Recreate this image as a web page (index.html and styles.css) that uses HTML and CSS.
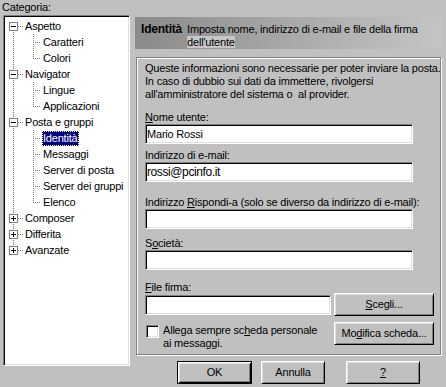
FILE: index.html
```html
<!DOCTYPE html>
<html lang="it">
<head>
<meta charset="UTF-8" />
<title>Preferenze - Identità</title>
<link rel="stylesheet" href="styles.css">
</head>
<body>
<div class="dialog">
    <div class="categories">
        <div class="caption">Categoria:</div>
        <div class="tree">
            <ul class="tree-root">
                <li>
                    <div class="row"><svg class="toggle" width="9" height="9" viewBox="0 0 9 9"><rect x="0.5" y="0.5" width="8" height="8" fill="#fff" stroke="#808080"/><path d="M2 4.5h5" stroke="#000"/></svg><span class="dash"></span><span class="node">Aspetto</span></div>
                    <ul class="tree-sub">
                        <li class="row"><span class="dash"></span><span class="node">Caratteri</span></li>
                        <li class="row"><span class="dash"></span><span class="node">Colori</span></li>
                    </ul>
                </li>
                <li>
                    <div class="row"><svg class="toggle" width="9" height="9" viewBox="0 0 9 9"><rect x="0.5" y="0.5" width="8" height="8" fill="#fff" stroke="#808080"/><path d="M2 4.5h5" stroke="#000"/></svg><span class="dash"></span><span class="node">Navigator</span></div>
                    <ul class="tree-sub">
                        <li class="row"><span class="dash"></span><span class="node">Lingue</span></li>
                        <li class="row"><span class="dash"></span><span class="node">Applicazioni</span></li>
                    </ul>
                </li>
                <li>
                    <div class="row"><svg class="toggle" width="9" height="9" viewBox="0 0 9 9"><rect x="0.5" y="0.5" width="8" height="8" fill="#fff" stroke="#808080"/><path d="M2 4.5h5" stroke="#000"/></svg><span class="dash"></span><span class="node">Posta e gruppi</span></div>
                    <ul class="tree-sub">
                        <li class="row"><span class="dash"></span><span class="node selected">Identità</span></li>
                        <li class="row"><span class="dash"></span><span class="node">Messaggi</span></li>
                        <li class="row"><span class="dash"></span><span class="node">Server di posta</span></li>
                        <li class="row"><span class="dash"></span><span class="node">Server dei gruppi</span></li>
                        <li class="row"><span class="dash"></span><span class="node">Elenco</span></li>
                    </ul>
                </li>
                <li>
                    <div class="row"><svg class="toggle" width="9" height="9" viewBox="0 0 9 9"><rect x="0.5" y="0.5" width="8" height="8" fill="#fff" stroke="#808080"/><path d="M2 4.5h5M4.5 2v5" stroke="#000"/></svg><span class="dash"></span><span class="node">Composer</span></div>
                </li>
                <li>
                    <div class="row"><svg class="toggle" width="9" height="9" viewBox="0 0 9 9"><rect x="0.5" y="0.5" width="8" height="8" fill="#fff" stroke="#808080"/><path d="M2 4.5h5M4.5 2v5" stroke="#000"/></svg><span class="dash"></span><span class="node">Differita</span></div>
                </li>
                <li>
                    <div class="row"><svg class="toggle" width="9" height="9" viewBox="0 0 9 9"><rect x="0.5" y="0.5" width="8" height="8" fill="#fff" stroke="#808080"/><path d="M2 4.5h5M4.5 2v5" stroke="#000"/></svg><span class="dash"></span><span class="node">Avanzate</span></div>
                </li>
            </ul>
        </div>
    </div>

    <div class="panel">
        <div class="banner">
            <span class="banner-title">Identità</span>
            <span class="banner-text">Imposta nome, indirizzo di e-mail e file della firma <span class="hl">dell'utente</span></span>
        </div>

        <div class="group">
            <p class="intro">Queste informazioni sono necessarie per poter inviare la posta.<br>In caso di dubbio sui dati da immettere, rivolgersi<br>all'amministratore del sistema o&nbsp; al provider.</p>

            <div class="field f-name">
                <label><u>N</u>ome utente:</label>
                <input class="text" type="text" value="Mario Rossi">
            </div>
            <div class="field f-mail">
                <label>Indirizzo di e-mail:</label>
                <input class="text mail" type="text" value="rossi@pcinfo.it">
            </div>
            <div class="field f-reply">
                <label>Indirizzo <u>R</u>ispondi-a (solo se diverso da indirizzo di e-mail):</label>
                <input class="text" type="text">
            </div>
            <div class="field f-org">
                <label>S<u>o</u>cietà:</label>
                <input class="text" type="text">
            </div>
            <div class="field f-sig">
                <label><u>F</u>ile firma:</label>
                <div class="sig-row">
                    <input class="text short" type="text">
                    <button class="btn"><u>S</u>cegli...</button>
                </div>
            </div>
            <div class="card-row">
                <div class="check-wrap">
                    <input class="check" type="checkbox">
                    <span class="check-label">Allega sempre sc<u>h</u>eda personale<br>ai messaggi.</span>
                </div>
                <button class="btn">Mo<u>d</u>ifica scheda...</button>
            </div>
        </div>

        <div class="actions">
            <button class="btn default ok">OK</button>
            <button class="btn cancel">Annulla</button>
            <button class="btn help"><u>?</u></button>
        </div>
    </div>
</div>
</body>
</html>
```

FILE: styles.css
```css
* {
    margin: 0;
    padding: 0;
    box-sizing: border-box;
}
body {
    width: 446px;
    height: 387px;
    overflow: hidden;
    background: #c0c0c0;
    color: #000;
    font-family: "Liberation Sans", Arial, sans-serif;
    font-size: 11px;
    letter-spacing: -0.2px;
    line-height: 13px;
}
u { text-decoration: underline; text-underline-offset: 1px; }

.dialog {
    display: flex;
    gap: 5px;
    padding: 1px 0 0 3px;
}

/* left: category tree */
.categories {
    width: 127px;
}
.caption {
    height: 14px;
    margin-left: -1px;
}
.tree {
    height: 351px;
    background: #fff;
    border: 1px solid;
    border-color: #808080 #fff #fff #808080;
    box-shadow: inset 1px 1px #000, inset -1px -1px #dfdfdf;
    padding: 1px;
}
.tree ul { list-style: none; }
.tree-root {
    padding: 1px 0 0 4px;
    background: repeating-linear-gradient(to bottom, #808080 0 1px, transparent 1px 2px) no-repeat;
    background-size: 1px calc(100% - 16px);
    background-position: 8px 9px;
}
.tree-sub {
    margin-left: -4px;
    background: repeating-linear-gradient(to bottom, #808080 0 1px, transparent 1px 2px) no-repeat;
    background-size: 1px calc(100% - 8px);
    background-position: 28px 0;
}
.row {
    display: flex;
    align-items: center;
    height: 16px;
    white-space: nowrap;
}
.toggle { display: block; flex: none; }
.dash {
    width: 5px;
    height: 1px;
    flex: none;
    background: repeating-linear-gradient(to right, #808080 0 1px, transparent 1px 2px);
}
.tree-sub .dash {
    width: 8px;
    margin-left: 28px;
}
.node {
    margin-left: 1px;
    padding: 0 2px 0 1px;
    line-height: 15px;
}
.node.selected {
    background: #000080;
    color: #fff;
    outline: 1px dotted #ffff80;
    outline-offset: -1px;
}

/* right: preferences page */
.panel {
    width: 306px;
    padding-top: 16px;
}
.banner {
    display: flex;
    height: 32px;
    padding: 6px 4px 0 6px;
    background: linear-gradient(90deg, #8a8a8a, #b4b4b4 70%, #c4c4c4);
}
.banner-title {
    font-weight: bold;
    font-size: 12px;
    letter-spacing: -0.2px;
    white-space: nowrap;
}
.banner-text {
    flex: 1;
    margin-left: 5px;
}
.banner-text .hl { background: #c6c6c6; }

.group {
    height: 298px;
    margin: 8px 0 0 1px;
    padding: 4px 0 0 8px;
    border: 1px solid #808080;
    box-shadow: inset 1px 1px #fff, 1px 1px #fff;
}
.intro { white-space: nowrap; }

.field label { display: block; height: 13px; white-space: nowrap; }
.f-name { margin-top: 10px; }
.f-mail { margin-top: 5px; }
.f-reply { margin-top: 14px; }
.f-org { margin-top: 8px; }
.f-sig { margin-top: 11px; }

.text {
    display: block;
    width: 268px;
    height: 20px;
    padding: 0 1px;
    background: #fff;
    border: 1px solid;
    border-color: #808080 #fff #fff #808080;
    box-shadow: inset 1px 1px #000, inset -1px -1px #dfdfdf;
    font: inherit;
    letter-spacing: inherit;
    color: #000;
    outline: none;
}
.text.mail {
    font-size: 12px;
    letter-spacing: -0.4px;
}
.text.short { width: 186px; }

.sig-row,
.card-row {
    display: grid;
    grid-template-columns: 189px 100px;
    align-items: center;
}
.sig-row { height: 23px; margin-top: -1px; }
.card-row {
    margin-top: 6px;
    align-items: start;
}
.check-wrap {
    display: flex;
    align-items: flex-start;
    gap: 4px;
    padding: 3px 0 0 1px;
}
.check {
    appearance: none;
    width: 13px;
    height: 13px;
    flex: none;
    background: #fff;
    border: 1px solid;
    border-color: #808080 #fff #fff #808080;
    box-shadow: inset 1px 1px #000, inset -1px -1px #dfdfdf;
}
.check-label { margin-top: -1px; white-space: nowrap; }

.btn {
    height: 23px;
    width: 100px;
    background: #c0c0c0;
    border: 1px solid;
    border-color: #fff #000 #000 #fff;
    box-shadow: inset 1px 1px #dfdfdf, inset -1px -1px #808080;
    font: inherit;
    letter-spacing: inherit;
    color: #000;
}
.btn.default {
    border: 1px solid #000;
    box-shadow: inset 1px 1px #fff, inset -1px -1px #000, inset 2px 2px #dfdfdf, inset -2px -2px #808080;
}

.actions {
    display: flex;
    margin-top: 6px;
    padding-left: 42px;
}
.ok { width: 75px; }
.cancel { width: 64px; margin-left: 9px; }
.help { width: 74px; margin-left: 21px; }
```
